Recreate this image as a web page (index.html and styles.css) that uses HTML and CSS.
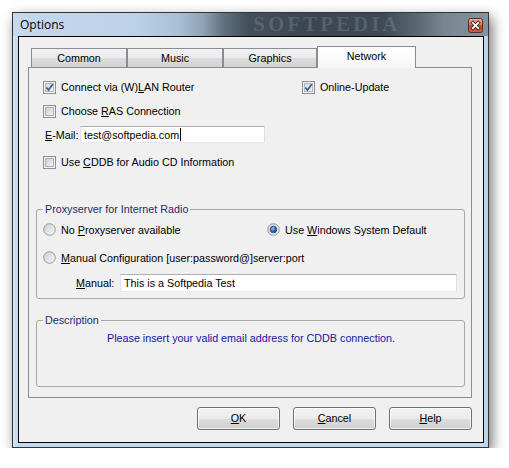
FILE: index.html
```html
<!DOCTYPE html>
<html>
<head>
<meta charset="utf-8">
<title>Options</title>
<link rel="stylesheet" href="styles.css">
</head>
<body>
<svg class="defs" width="0" height="0" aria-hidden="true">
  <defs>
    <linearGradient id="cbIn" x1="0" y1="0" x2="1" y2="1">
      <stop offset="0" stop-color="#c9cdd3"/>
      <stop offset="1" stop-color="#f4f5f6"/>
    </linearGradient>
    <linearGradient id="cbOn" x1="0" y1="0" x2="1" y2="1">
      <stop offset="0" stop-color="#d9dce0"/>
      <stop offset="1" stop-color="#f2f3f4"/>
    </linearGradient>
    <linearGradient id="rdIn" x1="0" y1="0" x2="1" y2="1">
      <stop offset="0" stop-color="#c8ccd2"/>
      <stop offset="1" stop-color="#fafafa"/>
    </linearGradient>
    <radialGradient id="rdDot" cx="0.4" cy="0.35" r="0.7">
      <stop offset="0" stop-color="#8fc2f5"/>
      <stop offset="0.6" stop-color="#2d63b8"/>
      <stop offset="1" stop-color="#183e7e"/>
    </radialGradient>
    <linearGradient id="clG" x1="0" y1="0" x2="0" y2="1">
      <stop offset="0" stop-color="#eeb1a2"/>
      <stop offset="0.45" stop-color="#dc7a62"/>
      <stop offset="0.5" stop-color="#c9482c"/>
      <stop offset="1" stop-color="#d8603c"/>
    </linearGradient>
  </defs>
</svg>

<div class="window">
  <div class="titlebar">
    <span class="title">Options</span>
    <span class="watermark">SOFTPEDIA</span>
    <svg class="close" width="15" height="15" viewBox="0 0 15 15">
      <rect x="0.5" y="0.5" width="14" height="14" rx="2" fill="url(#clG)" stroke="#5b2a20"/>
      <path d="M4.8 4.8 L10.2 10.2 M10.2 4.8 L4.8 10.2" stroke="#3a2a28" stroke-width="3.6" stroke-linecap="square"/>
      <path d="M4.8 4.8 L10.2 10.2 M10.2 4.8 L4.8 10.2" stroke="#ffffff" stroke-width="1.8" stroke-linecap="square"/>
    </svg>
  </div>
  <div class="frame">
    <div class="client">
      <div class="tabs">
        <div class="tabrow">
          <div class="tab">Common</div>
          <div class="tab">Music</div>
          <div class="tab tab-narrow">Graphics</div>
          <div class="tab active">Network</div>
        </div>
        <div class="panel">
          <div class="row r1">
            <div class="cb-item wide">
              <svg class="cb" width="13" height="13" viewBox="0 0 13 13"><rect x="0.5" y="0.5" width="12" height="12" fill="#f4f4f4" stroke="#8e8f8f"/><rect x="2.5" y="2.5" width="8" height="8" fill="url(#cbOn)" stroke="#b3b8bf"/><path d="M3.4 6.4 L5.5 9.1 L9.7 3.2" fill="none" stroke="#3f5d9e" stroke-width="1.7"/></svg>
              <span>Connect via (W)<u>L</u>AN Router</span>
            </div>
            <div class="cb-item">
              <svg class="cb" width="13" height="13" viewBox="0 0 13 13"><rect x="0.5" y="0.5" width="12" height="12" fill="#f4f4f4" stroke="#8e8f8f"/><rect x="2.5" y="2.5" width="8" height="8" fill="url(#cbOn)" stroke="#b3b8bf"/><path d="M3.4 6.4 L5.5 9.1 L9.7 3.2" fill="none" stroke="#3f5d9e" stroke-width="1.7"/></svg>
              <span>Online-Update</span>
            </div>
          </div>
          <div class="row r2">
            <div class="cb-item">
              <svg class="cb" width="13" height="13" viewBox="0 0 13 13"><rect x="0.5" y="0.5" width="12" height="12" fill="#f4f4f4" stroke="#8e8f8f"/><rect x="2.5" y="2.5" width="8" height="8" fill="url(#cbIn)" stroke="#aab0b8"/></svg>
              <span>Choose <u>R</u>AS Connection</span>
            </div>
          </div>
          <div class="row r3">
            <span class="email-label"><u>E</u>-Mail:</span>
            <div class="textbox email-box">test@softpedia.com<span class="caret"></span></div>
          </div>
          <div class="row r4">
            <div class="cb-item">
              <svg class="cb" width="13" height="13" viewBox="0 0 13 13"><rect x="0.5" y="0.5" width="12" height="12" fill="#f4f4f4" stroke="#8e8f8f"/><rect x="2.5" y="2.5" width="8" height="8" fill="url(#cbIn)" stroke="#aab0b8"/></svg>
              <span>Use <u>C</u>DDB for Audio CD Information</span>
            </div>
          </div>

          <div class="group g1">
            <span class="group-title">Proxyserver for Internet Radio</span>
            <div class="radio-row rr1">
              <div class="radio-item wide-r">
                <svg class="rd" width="13" height="13" viewBox="0 0 13 13"><circle cx="6.5" cy="6.5" r="5.8" fill="url(#rdIn)" stroke="#9a9a9a"/></svg>
                <span>No <u>P</u>roxyserver available</span>
              </div>
              <div class="radio-item">
                <svg class="rd" width="13" height="13" viewBox="0 0 13 13"><circle cx="6.5" cy="6.5" r="5.8" fill="url(#rdIn)" stroke="#9a9a9a"/><circle cx="6.5" cy="6.5" r="3.3" fill="url(#rdDot)" stroke="#2a4878" stroke-width="0.8"/></svg>
                <span>Use <u>W</u>indows System Default</span>
              </div>
            </div>
            <div class="radio-row rr2">
              <div class="radio-item">
                <svg class="rd" width="13" height="13" viewBox="0 0 13 13"><circle cx="6.5" cy="6.5" r="5.8" fill="url(#rdIn)" stroke="#9a9a9a"/></svg>
                <span><u>M</u>anual Configuration [user:password@]server:port</span>
              </div>
            </div>
            <div class="manual-row">
              <span class="manual-label"><u>M</u>anual:</span>
              <div class="textbox manual-box">This is a Softpedia Test</div>
            </div>
          </div>

          <div class="group g2">
            <span class="group-title">Description</span>
            <div class="desc-text">Please insert your valid email address for CDDB connection.</div>
          </div>
        </div>
      </div>
      <div class="buttons">
        <div class="btn"><u>O</u>K</div>
        <div class="btn"><u>C</u>ancel</div>
        <div class="btn"><u>H</u>elp</div>
      </div>
    </div>
  </div>
</div>
</body>
</html>
```
FILE: styles.css
```css
* { box-sizing: border-box; }
html, body { margin: 0; padding: 0; background: #ffffff; }
body {
  font-family: "Liberation Sans", Arial, sans-serif;
  font-size: 10.75px;
  color: #000;
}
.defs { display: block; width: 0; height: 0; overflow: hidden; }

.window {
  margin: 12px 0 0 12px;
  width: 477px;
  height: 436px;
  border: 1px solid #30353a;
  background: linear-gradient(to right, #d6e6f5 0, #c3d9ef 5px, #c3d9ef 470px, #b7cfe8 475px);
  box-shadow: 3px 5px 12px rgba(0, 0, 0, 0.55);
  display: flex;
  flex-direction: column;
}

.titlebar {
  height: 23px;
  flex: none;
  display: flex;
  align-items: center;
  overflow: hidden;
  background: linear-gradient(to right,
    #c6d9ed 0px, #bcd2e8 120px, #a9c0d6 165px, #8ea3b7 190px,
    #62727f 210px, #444f59 235px, #3b4650 300px, #3f4a54 370px,
    #5b6873 405px, #788591 430px, #8794a0 475px);
}
.title {
  font-family: "Open Sans", "Noto Sans", sans-serif;
  font-size: 12px;
  padding-left: 7px;
  color: #000;
  line-height: 23px;
}
.watermark {
  margin-left: 189px;
  font-family: "Liberation Serif", serif;
  font-weight: bold;
  font-size: 21px;
  letter-spacing: 3px;
  line-height: 23px;
  color: rgba(150, 162, 174, 0.28);
}
.close {
  display: block;
  flex: none;
  margin-left: auto;
  margin-right: 5px;
  align-self: flex-start;
  margin-top: 5px;
}

.frame {
  flex: 1;
  padding: 0 4px 4px 5px;
}
.client {
  height: 407px;
  border: 1px solid #000;
  background: #f0f0f0;
  padding: 9px 0 0 9px;
}

.tabs { width: 444px; }
.tabrow {
  display: flex;
  align-items: flex-end;
  height: 21px;
  padding-left: 3px;
}
.tab {
  width: 96px;
  height: 19px;
  border: 1px solid #898c95;
  border-bottom: none;
  background: linear-gradient(#f2f2f2 0%, #ebebeb 50%, #dddddd 51%, #d2d2d2 100%);
  text-align: center;
  line-height: 18px;
}
.tab-narrow { width: 94px; }
.tab.active {
  width: 99px;
  height: 22px;
  margin-bottom: -1px;
  background: linear-gradient(#ffffff, #f6f6f6);
  line-height: 19px;
  position: relative;
  z-index: 1;
}

.panel {
  height: 331px;
  border: 1px solid #898c95;
  background: #f0f0f0;
  padding: 0 6px 0 7px;
}

.row {
  display: flex;
  align-items: center;
  height: 14px;
  padding-left: 7px;
}
.r1 { margin-top: 12px; }
.r2 { margin-top: 10px; }
.r3 { margin-top: 8px; height: 17px; }
.r4 { margin-top: 12px; }

.cb-item, .radio-item {
  display: flex;
  align-items: center;
  white-space: nowrap;
}
.cb, .rd { display: block; flex: none; margin-right: 5px; }
.wide { width: 259px; }
.wide-r { width: 224px; }

.email-label { width: 37px; padding-left: 2px; }
.textbox {
  height: 17px;
  border: 1px solid;
  border-color: #abadb3 #dbdfe6 #e3e9ef #e2e3ea;
  background: #fff;
  padding-left: 3px;
  display: flex;
  align-items: center;
  white-space: nowrap;
}
.email-box { width: 185px; }
.caret {
  display: inline-block;
  width: 1px;
  height: 13px;
  background: #000;
  margin-left: 1px;
}

.group {
  width: 429px;
  border: 1px solid #a8a8a8;
  border-radius: 3px;
}
.g1 { margin-top: 40px; padding-bottom: 6px; }
.g2 { margin-top: 21px; height: 67px; }
.group-title {
  display: block;
  width: fit-content;
  margin: -7px 0 0 6px;
  padding: 0 2px;
  background: #f0f0f0;
  line-height: 13px;
  color: #1d2c6e;
}
.radio-row {
  display: flex;
  align-items: center;
  height: 13px;
  padding-left: 6px;
}
.rr1 { margin-top: 7px; }
.rr2 { margin-top: 15px; }
.manual-row {
  display: flex;
  align-items: center;
  margin-top: 10px;
  padding-left: 39px;
}
.manual-label { width: 44px; }
.manual-box { width: 337px; height: 18px; }

.desc-text {
  margin-top: 5px;
  padding-left: 70px;
  line-height: 13px;
  color: #1515a0;
}

.buttons {
  display: flex;
  justify-content: flex-end;
  gap: 13px;
  padding-right: 11px;
  margin-top: 9px;
}
.btn {
  width: 83px;
  height: 23px;
  border: 1px solid #707070;
  border-radius: 3px;
  background: linear-gradient(#f2f2f2 0%, #ebebeb 50%, #dddddd 51%, #cfcfcf 100%);
  box-shadow: inset 0 0 0 1px rgba(255, 255, 255, 0.7);
  text-align: center;
  line-height: 21px;
}
```
